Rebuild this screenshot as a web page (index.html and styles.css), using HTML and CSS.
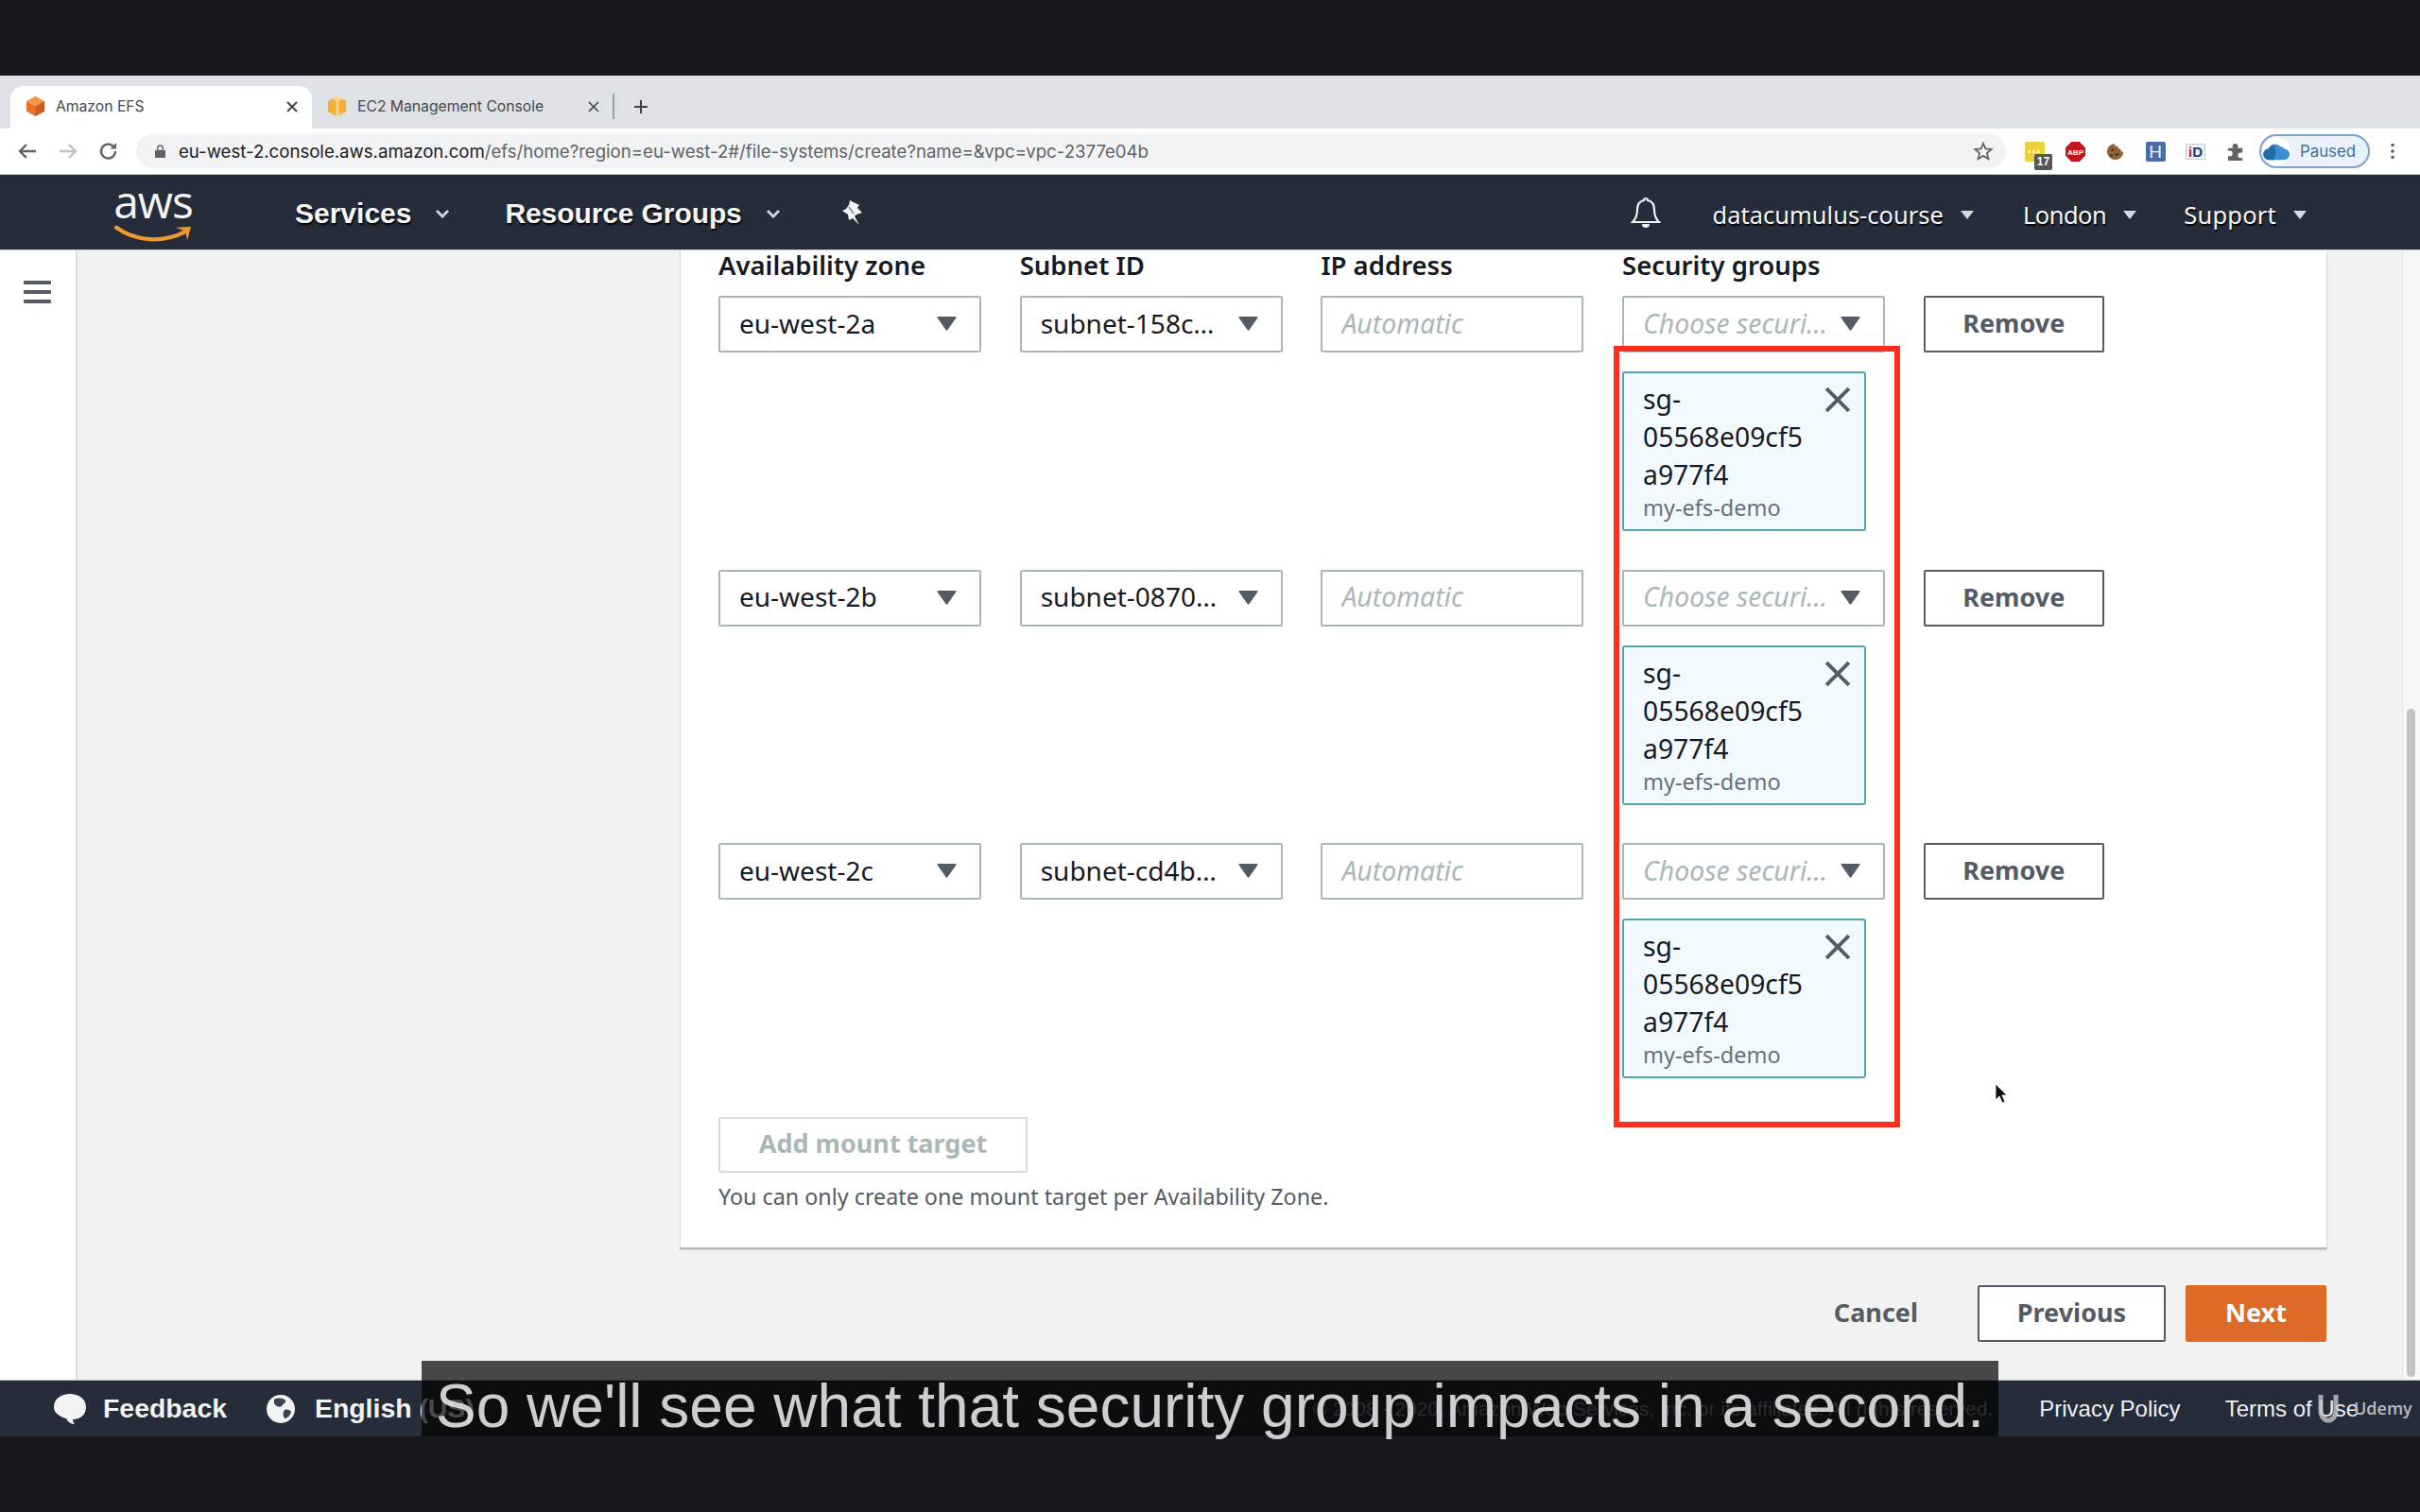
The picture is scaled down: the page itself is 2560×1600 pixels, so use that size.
FILE: index.html
```html
<!DOCTYPE html>
<html lang="en">
<head>
<meta charset="utf-8">
<title>Amazon EFS</title>
<link rel="stylesheet" href="styles.css">
</head>
<body>
<svg class="defs" width="0" height="0" aria-hidden="true">
  <symbol id="caret" viewBox="0 0 21 16"><path d="M1.5 1h18a1 1 0 0 1 .8 1.5l-8.8 12.5a1.2 1.2 0 0 1-2 0L.7 2.500A1 1 0 0 1 1.500 1z" fill="#545b64"/></symbol>
  <symbol id="close" viewBox="0 0 26 26"><path d="M2 2l22 22M24 2L2 24" stroke="#545b64" stroke-width="3.600" fill="none"/></symbol>
  <symbol id="chev" viewBox="0 0 16 10"><path d="M2 2l6 6 6-6" stroke="#d5d9dd" stroke-width="2.800" fill="none"/></symbol>
  <symbol id="tri" viewBox="0 0 14 9"><path d="M0 0h14L7 9z" fill="#d5dbdb"/></symbol>
</svg>
<div class="letterbox"></div>
<header class="tabstrip">
  <div class="tab tab-active">
    <svg class="favicon" viewBox="0 0 22 22"><path d="M11 0l10 5.500v11L11 22 1 16.500v-11z" fill="#e8732a"/><path d="M11 0l10 5.500L11 11 1 5.500z" fill="#f29a4a"/><path d="M11 11l10-5.500v11L11 22z" fill="#cf5a1d"/></svg>
    <span class="tab-title">Amazon EFS</span>
    <svg class="tab-x" viewBox="0 0 12 12"><path d="M1 1l10 10M11 1L1 11" stroke="#3c4043" stroke-width="1.800"/></svg>
  </div>
  <div class="tab">
    <svg class="favicon" viewBox="0 0 22 22"><path d="M11 0l10 5v12l-10 5-10-5V5z" fill="#eeb03a"/><path d="M6 2.500l4 2.500v17h3V5l4-2.500L11 0z" fill="#f7d88c"/></svg>
    <span class="tab-title">EC2 Management Console</span>
    <svg class="tab-x" viewBox="0 0 12 12"><path d="M1 1l10 10M11 1L1 11" stroke="#3c4043" stroke-width="1.500"/></svg>
  </div>
  <span class="tab-sep"></span>
  <svg class="tab-plus" viewBox="0 0 16 16"><path d="M8 1v14M1 8h14" stroke="#3c4043" stroke-width="2"/></svg>
</header>
<div class="toolbar">
  <svg class="tool" viewBox="0 0 24 24"><path d="M21 12H4M11 5l-7 7 7 7" stroke="#5f6368" stroke-width="2.400" fill="none"/></svg>
  <svg class="tool" viewBox="0 0 24 24"><path d="M3 12h17M13 5l7 7-7 7" stroke="#bdc1c6" stroke-width="2.400" fill="none"/></svg>
  <svg class="tool" viewBox="0 0 24 24"><path d="M19 12a7.500 7.500 0 1 1-2.200-5.300" stroke="#5f6368" stroke-width="2.400" fill="none"/><path d="M20 3v6.500h-6.500z" fill="#5f6368"/></svg>
  <div class="urlbar">
    <svg class="lock" viewBox="0 0 12 15"><path d="M3 6V4a3 3 0 0 1 6 0v2" stroke="#5f6368" stroke-width="1.500" fill="none"/><rect y="6" width="12" height="9" rx="1" fill="#5f6368"/></svg>
    <span class="url"><span class="url-host">eu-west-2.console.aws.amazon.com</span>/efs/home?region=eu-west-2#/file-systems/create?name=&amp;vpc=vpc-2377e04b</span>
    <svg class="star" viewBox="0 0 24 24"><path d="M12 3l2.700 6.200 6.700.6-5.100 4.400 1.600 6.600L12 17.300l-5.900 3.500 1.600-6.600-5.100-4.400 6.700-.6z" stroke="#5f6368" stroke-width="2" fill="none"/></svg>
  </div>
  <div class="ext ext-note"><span class="note-badge">17</span></div>
  <div class="ext"><svg viewBox="0 0 22 22"><path d="M6.500 0h9L22 6.500v9L15.500 22h-9L0 15.500v-9z" fill="#c4161c"/><text x="11" y="14.500" class="abp">ABP</text></svg></div>
  <div class="ext"><svg viewBox="0 0 22 22"><path d="M10 2a9 9 0 1 0 10 9c-2 0-3-1-3-3-2 0-3-1-3-3-2 0-4-1-4-3z" fill="#8d6238"/><circle cx="8" cy="9" r="1.500" fill="#4a2f17"/><circle cx="13" cy="14" r="1.500" fill="#4a2f17"/><circle cx="7" cy="15" r="1.300" fill="#4a2f17"/></svg></div>
  <div class="ext ext-h">H</div>
  <div class="ext ext-id"><span class="id-i">i</span>D</div>
  <div class="ext"><svg viewBox="0 0 22 22"><path d="M2 7h5V5a3 3 0 0 1 6 0v2h5v5h-2a3 3 0 0 0 0 6h2v3H2v-5h2a3 3 0 0 0 0-6H2z" fill="#5f6368"/></svg></div>
  <div class="paused">
    <svg class="cloud" viewBox="-1 -4 36 32"><path d="M8 23a7 7 0 0 1-1-14 9 9 0 0 1 15-3 7 7 0 0 1 5 3 7 7 0 0 1 0 14z" fill="#3d8fcf"/><path d="M8 23a7 7 0 0 1-1-14 9 9 0 0 1 7-5c3 4 3 14 0 19z" fill="#1f6fae"/></svg>
    <span>Paused</span>
  </div>
  <svg class="dots" viewBox="0 0 6 22"><circle cx="3" cy="3" r="2.200" fill="#5f6368"/><circle cx="3" cy="11" r="2.200" fill="#5f6368"/><circle cx="3" cy="19" r="2.200" fill="#5f6368"/></svg>
</div>
<nav class="awsnav">
  <div class="logo">
    <span class="logo-text">aws</span>
    <svg class="swoosh" viewBox="0 0 84 20"><path d="M1 3c22 16 52 17 76 5" stroke="#f0992f" stroke-width="4.500" fill="none" stroke-linecap="round"/><path d="M67 3l17-1-4 15-2-10z" fill="#f0992f"/></svg>
  </div>
  <a class="nav-main nav-services">Services</a>
  <svg class="chev" viewBox="0 0 16 10"><use href="#chev"/></svg>
  <a class="nav-main nav-groups">Resource Groups</a>
  <svg class="chev" viewBox="0 0 16 10"><use href="#chev"/></svg>
  <svg class="pin" viewBox="0 0 26 28"><path d="M9 1l10 5-2 3 5 5-6 2-2 2 5 9-7-7-4 2-1-6-6-4 4-2 3-4z" fill="#f4f5f6"/><path d="M8 8l5 7" stroke="#556" stroke-width="1.200"/></svg>
  <div class="nav-right">
    <svg class="bell" viewBox="0 0 32 36"><path d="M16 3a2 2 0 0 1 2 2c5 1 7 5 7 10 0 7 2 10 5 13H2c3-3 5-6 5-13 0-5 2-9 7-10a2 2 0 0 1 2-2z" stroke="#f2f3f3" stroke-width="2.200" fill="none"/><path d="M12 30a4 4 0 0 0 8 0z" fill="#f2f3f3"/></svg>
    <a class="nav-item nav-account">datacumulus-course</a><svg class="tri" viewBox="0 0 14 9"><use href="#tri"/></svg>
    <a class="nav-item nav-london">London</a><svg class="tri" viewBox="0 0 14 9"><use href="#tri"/></svg>
    <a class="nav-item nav-support">Support</a><svg class="tri" viewBox="0 0 14 9"><use href="#tri"/></svg>
  </div>
</nav>
<main class="main">
  <aside class="sidebar">
    <div class="burger"><span></span><span></span><span></span></div>
  </aside>
  <div class="content">
    <section class="card">
      <div class="cols labels">
        <div>Availability zone</div><div>Subnet ID</div><div>IP address</div><div>Security groups</div>
      </div>
      <div class="cols mount">
        <div class="field"><span class="val">eu-west-2a</span><svg class="caret"><use href="#caret"/></svg></div>
        <div class="field"><span class="val">subnet-158c…</span><svg class="caret"><use href="#caret"/></svg></div>
        <div class="field"><span class="val ph">Automatic</span></div>
        <div class="sgcol">
          <div class="field"><span class="val ph">Choose securi…</span><svg class="caret"><use href="#caret"/></svg></div>
          <div class="token"><svg class="token-x"><use href="#close"/></svg><div class="token-id">sg-<br>05568e09cf5<br>a977f4</div><div class="token-name">my-efs-demo</div></div>
        </div>
        <button class="btn remove">Remove</button>
      </div>
      <div class="cols mount">
        <div class="field"><span class="val">eu-west-2b</span><svg class="caret"><use href="#caret"/></svg></div>
        <div class="field"><span class="val">subnet-0870…</span><svg class="caret"><use href="#caret"/></svg></div>
        <div class="field"><span class="val ph">Automatic</span></div>
        <div class="sgcol">
          <div class="field"><span class="val ph">Choose securi…</span><svg class="caret"><use href="#caret"/></svg></div>
          <div class="token"><svg class="token-x"><use href="#close"/></svg><div class="token-id">sg-<br>05568e09cf5<br>a977f4</div><div class="token-name">my-efs-demo</div></div>
        </div>
        <button class="btn remove">Remove</button>
      </div>
      <div class="cols mount">
        <div class="field"><span class="val">eu-west-2c</span><svg class="caret"><use href="#caret"/></svg></div>
        <div class="field"><span class="val">subnet-cd4b…</span><svg class="caret"><use href="#caret"/></svg></div>
        <div class="field"><span class="val ph">Automatic</span></div>
        <div class="sgcol">
          <div class="field"><span class="val ph">Choose securi…</span><svg class="caret"><use href="#caret"/></svg></div>
          <div class="token"><svg class="token-x"><use href="#close"/></svg><div class="token-id">sg-<br>05568e09cf5<br>a977f4</div><div class="token-name">my-efs-demo</div></div>
        </div>
        <button class="btn remove">Remove</button>
      </div>
      <button class="btn add">Add mount target</button>
      <p class="hint">You can only create one mount target per Availability Zone.</p>
    </section>
    <div class="actions">
      <span class="cancel">Cancel</span>
      <button class="btn prev">Previous</button>
      <button class="btn next">Next</button>
    </div>
  </div>
  <div class="scrolltrack"><div class="scrollthumb"></div></div>
  <div class="redbox"></div>
  <svg class="cursor" viewBox="0 0 14 22"><path d="M1 1v17l4-4 3 7 3-1-3-7h5z" fill="#111" stroke="#fff" stroke-width=".8"/></svg>
</main>
<footer class="footer">
  <svg class="f-ico" viewBox="0 0 36 34"><path d="M18 1c9 0 17 5 17 14s-7 13-14 13c0 2 1 4 2 5-4 0-7-2-9-6C7 25 1 21 1 15 1 6 9 1 18 1z" fill="#f2f3f3"/></svg>
  <span class="f-bold f-feedback">Feedback</span>
  <svg class="f-ico f-globe" viewBox="0 0 32 32"><circle cx="16" cy="16" r="15" fill="#f2f3f3"/><path d="M9 6c4-2 9-2 12 1 1 3-3 3-4 6-3 2-6 0-8-3zM20 17c3-1 6 0 7 2-1 4-4 7-7 7-2-3-2-6 0-9z" fill="#3a4350"/></svg>
  <span class="f-bold">English (US)</span>
  <span class="f-copy">© 2008 - 2020, Amazon Web Services, Inc. or its affiliates. All rights reserved.</span>
  <a class="f-link f-privacy">Privacy Policy</a>
  <a class="f-link">Terms of Use</a>
</footer>
<div class="letterbox"></div>
<div class="subtitle">So we'll see what that security group impacts in a second.</div>
<div class="udemy"><svg class="udemy-u" viewBox="0 0 26 34"><path d="M5 3v17c0 6 4 10 8 10s8-4 8-10V3" stroke="#c4c6ca" stroke-width="5" fill="none" opacity=".8"/></svg><span>Udemy</span></div>
</body>
</html>
```
FILE: styles.css
```css
* { box-sizing: border-box; }
html, body { margin: 0; padding: 0; }
body {
  width: 2560px;
  height: 1600px;
  overflow: hidden;
  position: relative;
  display: flex;
  flex-direction: column;
  background: #15181d;
  font-family: "Noto Sans", sans-serif;
  color: #16191f;
}
.defs { position: absolute; }
.letterbox { height: 80px; flex: none; background: #15181d; }

/* browser chrome */
.tabstrip { height: 56px; flex: none; background: #dee1e6; display: flex; align-items: flex-start; padding: 11px 0 0 11px; font-family: Inter, sans-serif; font-size: 15.700px; color: #45494d; }
.tab { height: 45px; width: 319px; display: flex; align-items: center; padding: 0 16px 2px; position: relative; }
.tab-active { background: #fff; border-radius: 14px 14px 0 0; }
.favicon { width: 21px; height: 21px; flex: none; margin-right: 11px; }
.tab-title { flex: 1; white-space: nowrap; }
.tab-x { width: 12px; height: 12px; flex: none; margin-right: -1px; }
.tab-sep { width: 1.500px; height: 27px; background: #9aa0a6; margin: 8px 0 0 -1px; }
.tab-plus { width: 16px; height: 16px; margin: 14px 0 0 20px; }

.toolbar { height: 49px; flex: none; background: #fff; border-bottom: 1px solid #c6c9cc; display: flex; align-items: center; padding: 0 0 0 17px; }
.tool { width: 24px; height: 24px; margin-right: 19px; flex: none; }
.urlbar { width: 1978px; height: 36px; margin: 0 20px 0 -2px; background: #f1f3f4; border-radius: 18px; display: flex; align-items: center; padding: 0 13px 0 20px; font-family: Inter, sans-serif; font-size: 18.630px; color: #5f6368; flex: none; }
.lock { width: 11px; height: 14px; flex: none; margin-right: 14px; }
.url { flex: 1; white-space: nowrap; }
.url-host { color: #202124; }
.star { width: 22px; height: 22px; flex: none; }
.ext { width: 21px; height: 21px; margin-right: 21.500px; flex: none; position: relative; font-family: "Liberation Sans", sans-serif; }
.ext svg { display: block; width: 21px; height: 21px; }
.abp { font-size: 8.500px; font-weight: 700; fill: #fff; text-anchor: middle; font-family: "Liberation Sans", sans-serif; }
.ext-note { background: #ecd13c; border-radius: 2px; }
.ext-note::before { content: ""; position: absolute; left: 3px; top: 9px; width: 3px; height: 3px; background: #fff6c0; box-shadow: 5px 0 #fff6c0, 10px 0 #fff6c0; }
.note-badge { position: absolute; left: 10px; top: 13px; width: 19px; height: 17px; background: #555; color: #fff; font-size: 12px; font-weight: 700; text-align: center; line-height: 17px; border-radius: 2px; }
.ext-h { background: #4a6da7; color: #e8eef7; font-size: 19px; line-height: 21px; text-align: center; border-radius: 2px; }
.ext-id { border: 1px solid #c9ccd1; background: #eef1f4; color: #123f7a; font-size: 15px; font-weight: 700; text-align: center; height: 17px; line-height: 15px; }
.id-i { color: #c8242a; }
.paused { width: 117px; height: 36px; margin-left: -7px; border: 2px solid #7ba3cb; border-radius: 18px; background: #eaf1fb; display: flex; align-items: center; padding-left: 1px; flex: none; font-family: Inter, sans-serif; font-size: 16.800px; color: #3f6fa8; }
.cloud { width: 30px; height: 30px; border-radius: 50%; background: #fff; margin-right: 10px; flex: none; }
.dots { width: 6px; height: 18px; margin-left: 21px; flex: none; }

/* aws nav */
.awsnav { height: 80px; flex: none; background: #252d3b; display: flex; align-items: center; color: #f4f5f6; border-bottom: 1px solid #c9cfd1; position: relative; }
.logo { width: 84px; margin-left: 120px; display: flex; flex-direction: column; align-items: center; height: 64px; }
.logo-text { font-family: "Open Sans", sans-serif; font-size: 48px; line-height: 46px; height: 46px; letter-spacing: -1px; margin-top: -3px; }
.swoosh { width: 84px; height: 20px; margin-top: 2px; }
.nav-main { font-family: "Liberation Sans", sans-serif; font-weight: 700; font-size: 30px; text-shadow: 1px 2px 2px #000; white-space: nowrap; padding-top: 2px; }
.nav-services { margin-left: 108px; }
.nav-groups { margin-left: 58px; letter-spacing: -.1px; }
.chev { width: 16px; height: 10px; margin-left: 25px; flex: none; margin-top: 3px; }
.pin { width: 26px; height: 28px; margin-left: 64px; flex: none; }
.nav-right { margin-left: auto; display: flex; align-items: center; padding-right: 120px; padding-top: 5px; }
.bell { width: 32px; height: 36px; margin-right: 54px; flex: none; margin-top: -5px; }
.nav-item { font-size: 25.500px; white-space: nowrap; text-shadow: 1px 2px 1px #000; }
.tri { width: 14px; height: 9px; margin: 0 0 0 18px; flex: none; }
.nav-london { margin-left: 52px; letter-spacing: -.5px; }
.nav-support { margin-left: 50px; letter-spacing: .2px; }

/* main */
.main { height: 1195px; flex: none; background: #f2f2f2; display: flex; position: relative; }
.sidebar { width: 82px; flex: none; background: #fff; border-right: 2px solid #dcdcdc; }
.burger { margin: 32px 0 0 25px; width: 29px; display: flex; flex-direction: column; gap: 6px; }
.burger span { height: 4px; background: #545b64; border-radius: 1px; }
.content { width: 1742px; margin-left: 637px; flex: none; }
.card { background: #fff; border-left: 1px solid #d5dbdb; border-bottom: 2px solid #aab7b8; padding: 1px 0 38px 40px; box-shadow: 1px 1px 2px rgba(0,0,0,.12); }
.cols { display: grid; grid-template-columns: 278px 278px 278px 278px 191px; column-gap: 40.700px; align-items: start; }
.labels { font-weight: 600; font-size: 27.500px; line-height: 30px; height: 30px; margin-bottom: 17px; }
.mount { margin-bottom: 40.500px; }
.field { height: 60px; border: 2px solid #aab7b8; border-radius: 2px; background: #fff; display: flex; align-items: center; padding: 0 24px 0 20px; }
.val { flex: 1; font-size: 28px; white-space: nowrap; overflow: hidden; padding-bottom: 3px; }
.ph { font-style: italic; color: #aab7b8; font-size: 28.400px; }
.caret { width: 21px; height: 16px; flex: none; margin-bottom: 2px; }
.token { margin-top: 20px; width: 258px; height: 169px; border: 2px solid #55a3b3; border-radius: 3px; background: #f1faff; padding: 7px 20px 0 20px; position: relative; }
.token-id { font-size: 28.300px; line-height: 40px; }
.token-name { font-size: 23.500px; line-height: 31px; color: #687078; margin-top: 0; }
.token-x { position: absolute; right: 14px; top: 14px; width: 28px; height: 28px; }
.btn { font-family: "Noto Sans", sans-serif; font-weight: 700; font-size: 27px; height: 60px; border-radius: 2px; background: #fff; border: 2px solid #545b64; color: #545b64; padding: 0 0 3px; display: block; }
.remove { width: 191px; }
.add { width: 327px; border-color: #d5dbdb; color: #aab7b8; height: 59px; margin-bottom: 9px; }
.hint { margin: 0; font-size: 23.300px; line-height: 32px; color: #545b64; }
.actions { display: flex; align-items: center; justify-content: flex-end; margin-top: 38.500px; }
.cancel { font-weight: 700; font-size: 27px; color: #545b64; margin-right: 63px; padding-bottom: 3px; }
.prev { width: 199px; margin-right: 21px; }
.next { width: 149px; background: #dd6b27; border-color: #dd6b27; color: #fff; }
.scrolltrack { position: absolute; right: 0; top: 0; bottom: 0; width: 19px; background: #f7f7f7; border-left: 1px solid #e6e6e6; }
.scrollthumb { position: absolute; left: 4px; top: 485px; width: 9px; height: 707px; background: #c2c2c2; border-radius: 5px; }
.redbox { position: absolute; left: 1707px; top: 101px; width: 303px; height: 827px; border: 6px solid #ff2d1c; }
.cursor { position: absolute; left: 2110px; top: 881px; width: 14px; height: 22px; }

/* footer */
.footer { height: 60px; flex: none; background: #252d3b; border-top: 1px solid #b8bcc0; display: flex; align-items: center; font-family: "Liberation Sans", sans-serif; font-size: 24px; color: #f2f3f3; white-space: nowrap; }
.f-ico { width: 36px; height: 34px; margin-left: 56px; flex: none; }
.f-bold { font-weight: 700; font-size: 28.400px; }
.f-feedback { margin-left: 17px; }
.f-globe { width: 32px; height: 32px; margin-left: 41px; margin-right: 20px; }
.f-copy { margin-left: auto; color: #8d939b; font-size: 21px; }
.f-link { color: #eef0f2; }
.f-privacy { margin-left: 49px; margin-right: 47px; }
.f-link:last-child { margin-right: 65px; }

/* overlays */
.subtitle { position: absolute; left: 446px; top: 1440px; width: 1668px; height: 80px; background: rgba(0,0,0,.7); color: rgba(255,255,255,.8); font-family: "Liberation Sans", sans-serif; font-size: 64px; line-height: 96px; text-align: center; white-space: nowrap; }
.udemy { position: absolute; left: 2450px; top: 1473px; display: flex; align-items: center; font-family: "Open Sans", sans-serif; font-weight: 600; font-size: 18px; color: #b9bcc1; }
.udemy-u { width: 26px; height: 34px; margin-right: 14px; }
```
